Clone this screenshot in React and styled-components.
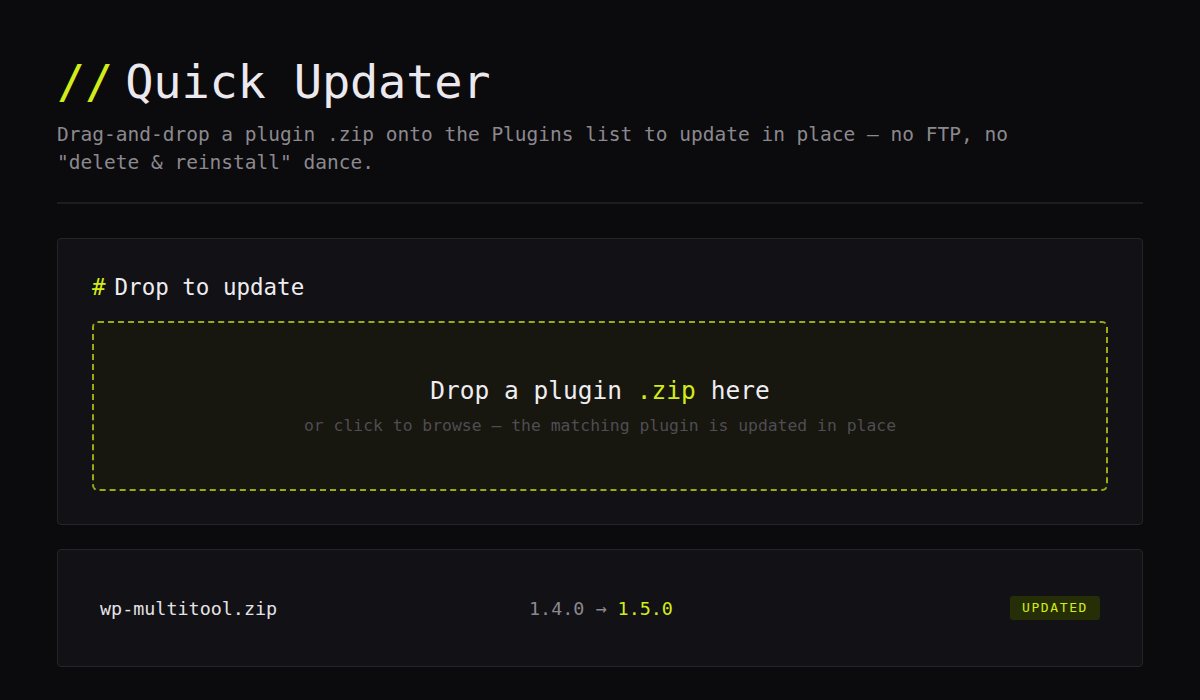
import React from "react";
import styled, { createGlobalStyle } from "styled-components";

const lime = "#d2ec19";
const mono = `"DejaVu Sans Mono", "Liberation Mono", monospace`;

const Global = createGlobalStyle`
  html, body {
    margin: 0;
    background: #0b0a0d;
  }
  body {
    font-family: ${mono};
    color: #e8e6ea;
  }
`;

const Page = styled.div`
  padding: 52px 57px 32px;
`;

const Title = styled.h1`
  margin: 0;
  font-size: 47px;
  font-weight: 500;
  line-height: 60px;
  color: #ebe9ee;
  letter-spacing: -0.2px;
`;

const Slashes = styled.span`
  color: ${lime};
  margin-right: 12px;
`;

const Lead = styled.p`
  margin: 9px 0 0;
  max-width: 1040px;
  font-size: 19.5px;
  line-height: 28px;
  color: #8b898f;
`;

const Divider = styled.hr`
  margin: 25px 0 34px;
  border: 0;
  border-top: 2px solid #1d1c21;
`;

const Card = styled.section`
  background: #121115;
  border: 1px solid #25242a;
  border-radius: 4px;
  padding: ${(p) => p.$pad || "34px 34px 33px"};
  margin-bottom: 24px;
`;

const Heading = styled.h2`
  margin: 0 0 20px;
  font-size: 22.5px;
  font-weight: 500;
  line-height: 28px;
  color: #eeecf0;
`;

const Hash = styled.span`
  color: ${lime};
  margin-right: 9px;
`;

const DropZone = styled.div`
  height: 166px;
  border: 2px dashed rgba(210, 236, 25, 0.7);
  border-radius: 6px;
  background: #17160f;
  display: flex;
  flex-direction: column;
  align-items: center;
  justify-content: center;
  gap: 8px;
  cursor: pointer;
`;

const DropTitle = styled.div`
  font-size: 24.5px;
  line-height: 32px;
  color: #efedf1;
`;

const Accent = styled.span`
  color: ${lime};
`;

const Hint = styled.div`
  font-size: 16.4px;
  line-height: 22px;
  color: #4f4d52;
`;

const Row = styled.div`
  display: grid;
  grid-template-columns: 429px 1fr auto;
  align-items: center;
  padding: 0 7px;
  font-size: 18.4px;
`;

const FileName = styled.span`
  color: #e4e2e6;
`;

const Version = styled.span`
  color: #8b898f;
`;

const Badge = styled.span`
  background: #262e07;
  color: ${lime};
  font-size: 13px;
  letter-spacing: 1.6px;
  padding: 4px 12px;
  border-radius: 3px;
  line-height: 16px;
`;

export default function App() {
  return (
    <>
      <Global />
      <Page>
        <Title>
          <Slashes>//</Slashes>Quick Updater
        </Title>
        <Lead>
          Drag-and-drop a plugin .zip onto the Plugins list to update in place — no FTP,
          no "delete &amp; reinstall" dance.
        </Lead>
        <Divider />
        <Card>
          <Heading>
            <Hash>#</Hash>Drop to update
          </Heading>
          <DropZone>
            <DropTitle>
              Drop a plugin <Accent>.zip</Accent> here
            </DropTitle>
            <Hint>or click to browse — the matching plugin is updated in place</Hint>
          </DropZone>
        </Card>
        <Card $pad="46px 35px 46px">
          <Row>
            <FileName>wp-multitool.zip</FileName>
            <Version>
              1.4.0 → <Accent>1.5.0</Accent>
            </Version>
            <Badge>UPDATED</Badge>
          </Row>
        </Card>
      </Page>
    </>
  );
}
